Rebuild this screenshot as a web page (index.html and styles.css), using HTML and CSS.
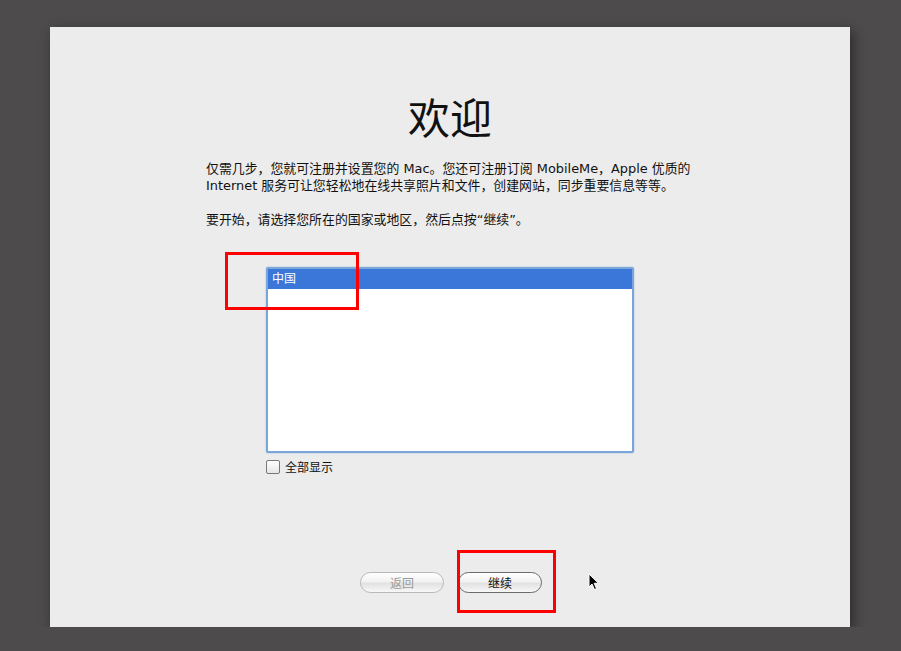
FILE: index.html
```html
<!DOCTYPE html>
<html>
<head>
  <meta charset="UTF-8">
  <title>欢迎</title>
  <link rel="stylesheet" href="styles.css">
</head>
<body>
  <div class="panel">
    <h1 class="title">欢迎</h1>
    <div class="intro">
      <p>仅需几步，您就可注册并设置您的 Mac。您还可注册订阅 MobileMe，Apple 优质的<br>Internet 服务可让您轻松地在线共享照片和文件，创建网站，同步重要信息等等。</p>
      <p>要开始，请选择您所在的国家或地区，然后点按“继续”。</p>
    </div>
    <div class="chooser">
      <ul class="country-list">
        <li class="selected">中国</li>
      </ul>
      <label class="show-all"><span class="checkbox"></span>全部显示</label>
    </div>
    <div class="button-group">
      <button type="button" class="back" disabled>返回</button>
      <button type="button" class="next">继续</button>
    </div>

    <!-- Markierungen -->
    <div class="mark mark-list"></div>
    <div class="mark mark-next"></div>
    <svg class="cursor" width="12" height="18" viewBox="0 0 12 18">
      <path d="M1 1 L1 14 L4 11 L6.5 16.5 L8.5 15.6 L6.2 10.3 L10.5 10.3 Z" fill="#000" stroke="#fff" stroke-width="1"/>
    </svg>
  </div>
</body>
</html>
```

FILE: styles.css
```css
body { margin: 0; background: #4d4b4c; font-family: "DejaVu Sans", "Noto Sans CJK SC", sans-serif; }
.panel { position: relative; box-sizing: border-box; width: 800px; height: 600px; margin: 27px 0 0 50px; background: #ececec; box-shadow: 3px 4px 12px rgba(0,0,0,0.45); padding-top: 63px; }
.title { margin: 0; text-align: center; font-family: "Noto Sans CJK SC", sans-serif; font-weight: normal; font-size: 42px; line-height: 52px; color: #111; }
.intro { margin: 18px 0 0 156px; width: 520px; font-size: 12.9px; line-height: 17px; color: #111; }
.intro p { margin: 0 0 17px; }
.chooser { margin: 39px 0 0 216px; }
.country-list { list-style: none; margin: 0; padding: 0; width: 364px; height: 182px; background: #fff; border: 2px solid #7aa5d8; box-shadow: 0 0 2px #9bbde3; border-radius: 2px; }
.country-list li { height: 20px; line-height: 20px; padding-left: 4px; font-size: 12px; }
.country-list .selected { background: #3a77d8; color: #fff; }
.show-all { display: flex; align-items: center; gap: 5px; margin-top: 5px; font-size: 12px; color: #111; }
.checkbox { width: 12px; height: 12px; border: 1px solid #777; border-radius: 2px; background: linear-gradient(#fff, #e6e6e6); }
.button-group { position: absolute; top: 545px; left: 310px; display: flex; gap: 14px; }
button { width: 84px; height: 21px; border-radius: 11px; font-family: "Noto Sans CJK SC", sans-serif; font-size: 12px; padding: 0; background: linear-gradient(#fff 0%, #f2f2f2 45%, #e2e2e2 55%, #f7f7f7 100%); }
.back { border: 1px solid #b8b8b8; color: #9a9a9a; }
.next { border: 1px solid #6a6a6a; color: #111; }
.mark { position: absolute; border: 3px solid #f00; box-sizing: border-box; }
.mark-list { left: 175px; top: 225px; width: 134px; height: 58px; }
.mark-next { left: 407px; top: 523px; width: 99px; height: 63px; }
.cursor { position: absolute; left: 538px; top: 546px; }
```
